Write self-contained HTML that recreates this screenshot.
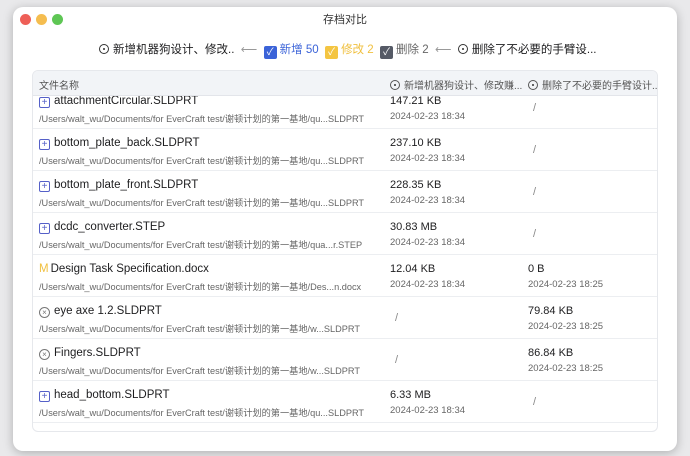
<!DOCTYPE html><html><head><meta charset="utf-8"><style>
*{margin:0;padding:0;box-sizing:border-box}
body{width:690px;height:456px;background:#e9e9eb;font-family:"Liberation Sans","Noto Sans CJK SC",sans-serif;position:relative;overflow:hidden}
.win{position:absolute;left:13px;top:7px;width:664px;height:444px;background:#fff;border-radius:10px;box-shadow:0 2px 10px rgba(0,0,0,.25);overflow:hidden}
.dot{position:absolute;top:7px;width:11px;height:11px;border-radius:50%}
.t{position:absolute;white-space:nowrap}
.tbl{position:absolute;left:19px;top:63px;width:626px;height:362px;border:1px solid #e6e8ec;border-radius:6px;overflow:hidden;background:#fff}
.hdr{position:absolute;left:0;top:0;width:100%;height:25px;background:#f2f4f7;border-bottom:1px solid #e3e5ea;z-index:2;font-size:10px;color:#555}
.row{position:absolute;left:0;width:100%;height:42px;border-bottom:1px solid #eceef1}
.nm{position:absolute;left:6px;top:8px;font-size:11.5px;color:#1d1d1f;white-space:nowrap}
.pt{position:absolute;left:6px;top:24px;font-size:9.2px;color:#666;white-space:nowrap}
.sz{position:absolute;top:8px;font-size:11px;color:#1d1d1f}
.dt{position:absolute;top:24px;font-size:9.5px;color:#666}
.sl{position:absolute;top:15px;font-size:11px;color:#888}
.ic{display:inline-block;width:11px;height:11px;border:1px solid #5560c8;border-radius:2px;color:#5560c8;font-size:10px;line-height:9px;text-align:center;margin-right:4px;vertical-align:-1px}
.ix{display:inline-block;width:11px;height:11px;border:1px solid #777;border-radius:50%;color:#777;font-size:8px;line-height:9px;text-align:center;margin-right:4px;vertical-align:-1px}
.cir{display:inline-block;width:10px;height:10px;border:1px solid #333;border-radius:50%;position:relative;vertical-align:-1px;margin-right:4px}
.cir:after{content:"";position:absolute;left:3px;top:3px;width:2px;height:2px;background:#333;border-radius:50%}
.cb{display:inline-block;width:13px;height:13px;border-radius:2px;color:#fff;font-size:10px;line-height:13px;text-align:center;vertical-align:-2px;margin-right:3px}
</style></head><body>
<div class="win">
<div class="dot" style="left:7px;background:#ee5f57"></div>
<div class="dot" style="left:23px;background:#f5bd4f"></div>
<div class="dot" style="left:39px;background:#5ec654"></div>
<div class="t" style="left:0;width:664px;text-align:center;top:4px;font-size:11px;color:#333">存档对比</div>
<div class="t" style="left:86px;top:34px;font-size:11.5px;color:#1d1d1f"><span class="cir"></span>新增机器狗设计、修改..&nbsp;&nbsp;<span style="color:#999">⟵</span>&nbsp;&nbsp;<span class="cb" style="background:#3b63d8">✓</span><span style="color:#3b63d8">新增 50</span>&nbsp;&nbsp;<span class="cb" style="background:#f4c542">✓</span><span style="color:#f0c040">修改 2</span>&nbsp;&nbsp;<span class="cb" style="background:#555a66">✓</span><span style="color:#666">删除 2</span>&nbsp;&nbsp;<span style="color:#999">⟵</span>&nbsp;&nbsp;<span class="cir"></span>删除了不必要的手臂设...</div>
<div class="tbl">
<div class="hdr"><span class="t" style="left:6px;top:6px">文件名称</span><span class="t" style="left:357px;top:6px"><span class="cir" style="border-color:#555"></span>新增机器狗设计、修改赚...</span><span class="t" style="left:495px;top:6px"><span class="cir" style="border-color:#555"></span>删除了不必要的手臂设计...</span></div>

<div class="row" style="top:16px"><div class="nm"><span class="ic">+</span>attachmentCircular.SLDPRT</div><div class="pt">/Users/walt_wu/Documents/for EverCraft test/谢顿计划的第一基地/qu...SLDPRT</div><div class="sz" style="left:357px">147.21 KB</div><div class="dt" style="left:357px">2024-02-23 18:34</div><div class="sl" style="left:500px">/</div></div>
<div class="row" style="top:58px"><div class="nm"><span class="ic">+</span>bottom_plate_back.SLDPRT</div><div class="pt">/Users/walt_wu/Documents/for EverCraft test/谢顿计划的第一基地/qu...SLDPRT</div><div class="sz" style="left:357px">237.10 KB</div><div class="dt" style="left:357px">2024-02-23 18:34</div><div class="sl" style="left:500px">/</div></div>
<div class="row" style="top:100px"><div class="nm"><span class="ic">+</span>bottom_plate_front.SLDPRT</div><div class="pt">/Users/walt_wu/Documents/for EverCraft test/谢顿计划的第一基地/qu...SLDPRT</div><div class="sz" style="left:357px">228.35 KB</div><div class="dt" style="left:357px">2024-02-23 18:34</div><div class="sl" style="left:500px">/</div></div>
<div class="row" style="top:142px"><div class="nm"><span class="ic">+</span>dcdc_converter.STEP</div><div class="pt">/Users/walt_wu/Documents/for EverCraft test/谢顿计划的第一基地/qua...r.STEP</div><div class="sz" style="left:357px">30.83 MB</div><div class="dt" style="left:357px">2024-02-23 18:34</div><div class="sl" style="left:500px">/</div></div>
<div class="row" style="top:184px"><div class="nm"><span style="color:#f0c040;margin-right:2px">M</span>Design Task Specification.docx</div><div class="pt">/Users/walt_wu/Documents/for EverCraft test/谢顿计划的第一基地/Des...n.docx</div><div class="sz" style="left:357px">12.04 KB</div><div class="dt" style="left:357px">2024-02-23 18:34</div><div class="sz" style="left:495px">0 B</div><div class="dt" style="left:495px">2024-02-23 18:25</div></div>
<div class="row" style="top:226px"><div class="nm"><span class="ix">×</span>eye axe 1.2.SLDPRT</div><div class="pt">/Users/walt_wu/Documents/for EverCraft test/谢顿计划的第一基地/w...SLDPRT</div><div class="sl" style="left:362px">/</div><div class="sz" style="left:495px">79.84 KB</div><div class="dt" style="left:495px">2024-02-23 18:25</div></div>
<div class="row" style="top:268px"><div class="nm"><span class="ix">×</span>Fingers.SLDPRT</div><div class="pt">/Users/walt_wu/Documents/for EverCraft test/谢顿计划的第一基地/w...SLDPRT</div><div class="sl" style="left:362px">/</div><div class="sz" style="left:495px">86.84 KB</div><div class="dt" style="left:495px">2024-02-23 18:25</div></div>
<div class="row" style="top:310px"><div class="nm"><span class="ic">+</span>head_bottom.SLDPRT</div><div class="pt">/Users/walt_wu/Documents/for EverCraft test/谢顿计划的第一基地/qu...SLDPRT</div><div class="sz" style="left:357px">6.33 MB</div><div class="dt" style="left:357px">2024-02-23 18:34</div><div class="sl" style="left:500px">/</div></div>
<div class="row" style="top:352px"><div class="nm"><span class="ic">+</span>head_top.SLDPRT</div></div>
</div>
</div>
</body></html>
